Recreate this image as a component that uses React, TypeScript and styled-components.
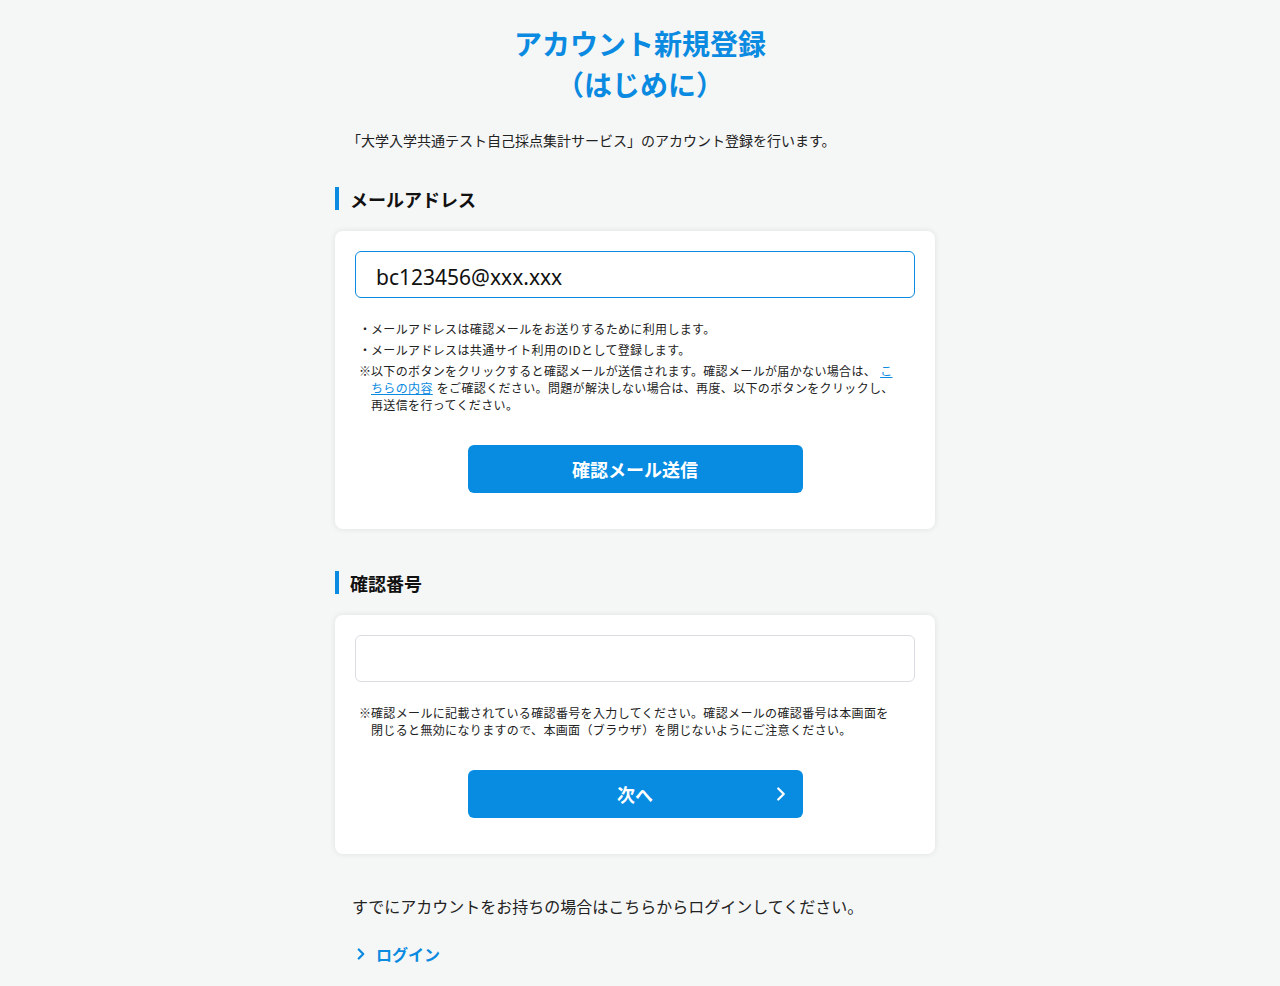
import React from "react";
import styled, { createGlobalStyle } from "styled-components";
import { ChevronRight } from "lucide-react";

const GlobalStyle = createGlobalStyle`
  html, body {
    margin: 0;
    padding: 0;
    background: #f5f6f6;
  }
  body {
    font-family: "Noto Sans CJK JP", "Noto Sans", sans-serif;
    color: #222;
    padding-right: 10px;
  }
`;

const Page = styled.main`
  width: 600px;
  margin: 0 auto;
  padding: 23px 0 40px;
`;

const Title = styled.h1`
  margin: 0;
  padding-left: 10px;
  text-align: center;
  color: #0a8ae0;
  font-size: 28px;
  font-weight: 700;
  line-height: 41px;
`;

const Lead = styled.p`
  margin: 23px 0 0 12px;
  font-size: 14px;
  line-height: 24px;
  color: #222;
`;

const SectionHead = styled.h2<{ $top: number }>`
  margin: ${(p) => p.$top}px 0 0;
  display: flex;
  align-items: center;
  height: 23px;
  border-left: 4px solid #0a8ae0;
  padding-left: 11px;
  font-size: 18px;
  font-weight: 700;
  color: #111;
`;

const Card = styled.section`
  margin-top: 21px;
  background: #fff;
  border-radius: 8px;
  box-shadow: 0 0 6px rgba(0, 0, 0, 0.09);
  padding: 20px 20px 36px;
`;

const Input = styled.input<{ $active?: boolean }>`
  display: block;
  box-sizing: border-box;
  width: 100%;
  height: 47px;
  border: 1px solid ${(p) => (p.$active ? "#0a8ae0" : "#dcdce4")};
  border-radius: 6px;
  padding: 5px 20px 0;
  font-family: "Noto Sans", sans-serif;
  font-size: 21px;
  color: #111;
  outline: none;
`;

const Notes = styled.ul`
  list-style: none;
  margin: 22px 0 0;
  padding: 0 20px 0 4px;
  font-size: 12px;
  letter-spacing: 0.35px;
  color: #222;
`;

const Note = styled.li<{ $mark: string; $gap?: number }>`
  position: relative;
  padding-left: 12px;
  line-height: 17px;
  margin-top: ${(p) => p.$gap ?? 4}px;
  &::before {
    content: "${(p) => p.$mark}";
    position: absolute;
    left: 0;
    top: 0;
  }
`;

const InlineLink = styled.a`
  color: #0a8ae0;
  text-decoration: underline;
  margin: 0 4px;
`;

const Button = styled.button`
  position: relative;
  display: flex;
  align-items: center;
  justify-content: center;
  width: 335px;
  height: 48px;
  margin: 32px auto 0;
  border: none;
  border-radius: 6px;
  background: #078ce2;
  color: #fff;
  font-family: "Noto Sans CJK JP", sans-serif;
  font-size: 18px;
  font-weight: 700;
  cursor: pointer;
`;

const ButtonChevron = styled.span`
  position: absolute;
  right: 11px;
  top: 50%;
  transform: translateY(-50%);
  display: flex;
`;

const FooterText = styled.p`
  margin: 40px 0 0 17px;
  font-size: 16px;
  line-height: 24px;
`;

const LoginLink = styled.a`
  display: inline-flex;
  align-items: center;
  gap: 6px;
  margin: 24px 0 0 17px;
  color: #0a8ae0;
  font-size: 16px;
  font-weight: 700;
  text-decoration: none;
`;

export default function App() {
  return (
    <>
      <GlobalStyle />
      <Page>
        <Title>
          アカウント新規登録
          <br />
          （はじめに）
        </Title>
        <Lead>「大学入学共通テスト自己採点集計サービス」のアカウント登録を行います。</Lead>

        <SectionHead $top={35}>メールアドレス</SectionHead>
        <Card>
          <Input $active defaultValue="bc123456@xxx.xxx" />
          <Notes>
            <Note $mark="・" $gap={0}>メールアドレスは確認メールをお送りするために利用します。</Note>
            <Note $mark="・">メールアドレスは共通サイト利用のIDとして登録します。</Note>
            <Note $mark="※">
              以下のボタンをクリックすると確認メールが送信されます。確認メールが届かない場合は、
              <InlineLink href="#">こちらの内容</InlineLink>
              をご確認ください。問題が解決しない場合は、再度、以下のボタンをクリックし、再送信を行ってください。
            </Note>
          </Notes>
          <Button>確認メール送信</Button>
        </Card>

        <SectionHead $top={42}>確認番号</SectionHead>
        <Card>
          <Input />
          <Notes>
            <Note $mark="※" $gap={0}>
              確認メールに記載されている確認番号を入力してください。確認メールの確認番号は本画面を閉じると無効になりますので、本画面（ブラウザ）を閉じないようにご注意ください。
            </Note>
          </Notes>
          <Button>
            次へ
            <ButtonChevron>
              <ChevronRight size={22} strokeWidth={2.5} />
            </ButtonChevron>
          </Button>
        </Card>

        <FooterText>すでにアカウントをお持ちの場合はこちらからログインしてください。</FooterText>
        <LoginLink href="#">
          <ChevronRight size={18} strokeWidth={3} />
          ログイン
        </LoginLink>
      </Page>
    </>
  );
}
